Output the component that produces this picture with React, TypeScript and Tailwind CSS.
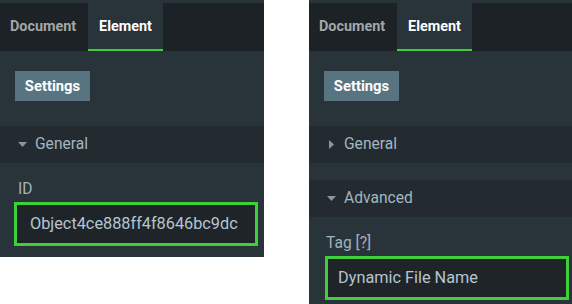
type Section = { title: string; open: boolean };

function Caret({ open }: { open: boolean }) {
  return open ? (
    <svg width="9" height="5" viewBox="0 0 9 5" className="shrink-0">
      <path d="M0 0 L9 0 L4.5 5 Z" fill="#8797a2" />
    </svg>
  ) : (
    <svg width="5" height="9" viewBox="0 0 5 9" className="shrink-0 ml-[2px] mr-[2px]">
      <path d="M0 0 L5 4.5 L0 9 Z" fill="#8797a2" />
    </svg>
  );
}

function Header({ title, open }: Section) {
  return (
    <div className="h-[37px] bg-[#232a30] flex items-center gap-[8px] pl-[18px] text-[15.6px] text-[#a4b6c2]">
      <Caret open={open} />
      <span>{title}</span>
    </div>
  );
}

function Panel({
  sections,
  label,
  value,
  height,
  width,
  inputLeft,
  labelPad,
  textPad,
}: {
  sections: Section[];
  label: string;
  value: string;
  height: string;
  width: string;
  inputLeft: string;
  labelPad: string;
  textPad: string;
}) {
  return (
    <div className={`${width} ${height} bg-[#29333a] flex flex-col overflow-hidden`}>
      <div className="h-[3px] bg-[#29333a]" />
      <div className="h-[48px] bg-[#1d2226] flex items-stretch text-[14.4px] font-bold">
        <div className="w-[88px] flex items-center pl-[10px] text-[#a3a7a9]">Document</div>
        <div className="w-[75px] bg-[#29333a] border-b-2 border-[#3fcf3a] flex items-center justify-center text-white pt-[2px]">
          Element
        </div>
      </div>
      <div className="pt-[20px] pl-[15px] pb-[25px]">
        <div className="w-[75px] h-[30px] bg-[#587480] flex items-center justify-center text-white text-[14.8px] font-bold">
          Settings
        </div>
      </div>
      <div className="flex flex-col gap-[17px]">
        {sections.map((s) => (
          <Header key={s.title} {...s} />
        ))}
      </div>
      <div className={`${inputLeft} pt-[16px]`}>
        <div className={`h-[20px] leading-[20px] text-[15.6px] text-[#a2b2bd] ${labelPad}`}>{label}</div>
        <div className="mt-[3px] w-[244px] h-[44px] border-[3px] border-[#3fcf3a] bg-[#1e2428] flex items-center text-[16.3px] text-[#b5c5d1]">
          <span className={textPad}>{value}</span>
        </div>
      </div>
    </div>
  );
}

export default function App() {
  return (
    <div className="w-[572px] h-[304px] bg-white flex items-start" style={{ fontFamily: "Roboto, 'Liberation Sans', sans-serif" }}>
      <Panel
        width="w-[264px]"
        height="h-[257px]"
        sections={[{ title: "General", open: true }]}
        label="ID"
        value="Object4ce888ff4f8646bc9dc"
        inputLeft="pl-[14px]"
        labelPad="pl-[4px]"
        textPad="pl-[13px]"
      />
      <div className="w-[45px]" />
      <Panel
        width="w-[263px]"
        height="h-[304px]"
        sections={[
          { title: "General", open: false },
          { title: "Advanced", open: true },
        ]}
        label="Tag [?]"
        value="Dynamic File Name"
        inputLeft="pl-[16px]"
        labelPad="pl-[1px]"
        textPad="pl-[10px]"
      />
    </div>
  );
}
